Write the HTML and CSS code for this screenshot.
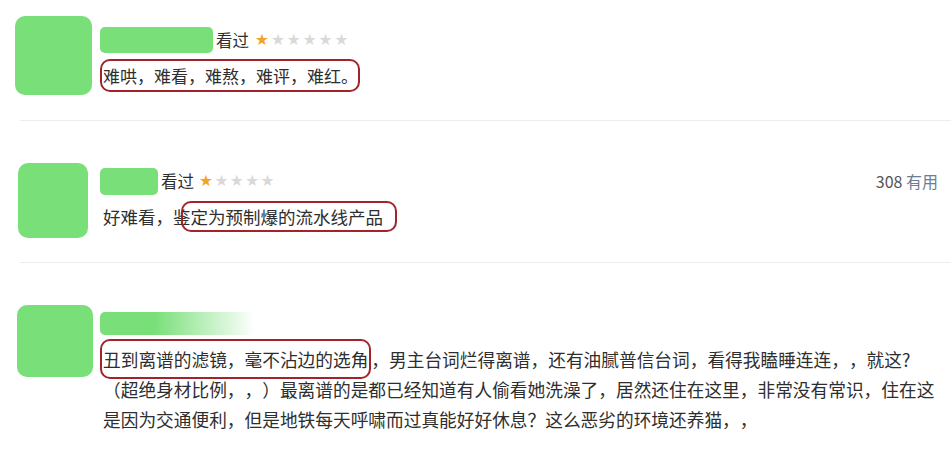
FILE: index.html
```html
<!DOCTYPE html>
<html lang="zh-CN">
<head>
  <meta charset="UTF-8" />
  <meta name="viewport" content="width=device-width, initial-scale=1.0" />
  <title>短评</title>
  <link rel="stylesheet" href="styles.css">
</head>
<body>
  <main class="reviews">

    <article class="review review--first">
      <div class="avatar avatar--a"></div>
      <div class="review-body review-body--first">
        <div class="review-head">
          <span class="name-mask name-mask--a"></span>
          <span class="watched">看过</span>
          <span class="stars"><span class="star-on">★</span>★★★★★</span>
        </div>
        <p class="review-text review-text--short"><span class="mark mark--a">难哄，难看，难熬，难评，难红。</span></p>
      </div>
    </article>

    <hr class="divider">

    <article class="review">
      <div class="avatar avatar--b"></div>
      <div class="review-body">
        <div class="review-head">
          <span class="name-mask name-mask--b"></span>
          <span class="watched">看过</span>
          <span class="stars stars--tight"><span class="star-on">★</span>★★★★</span>
          <span class="helpful">308 <span class="helpful-label">有用</span></span>
        </div>
        <p class="review-text">好难看，鉴<span class="mark mark--b">定为预制爆的流水线产品</span></p>
      </div>
    </article>

    <hr class="divider">

    <article class="review">
      <div class="avatar avatar--c"></div>
      <div class="review-body">
        <div class="review-head">
          <span class="name-mask name-mask--c"></span>
        </div>
        <p class="review-text review-text--long"><span class="mark mark--c">丑到离谱的滤镜，毫不沾边的选角</span>，男主台词烂得离谱，还有油腻普信台词，看得我瞌睡连连，，就这?<br>（超绝身材比例，，）最离谱的是都已经知道有人偷看她洗澡了，居然还住在这里，非常没有常识，住在这是因为交通便利，但是地铁每天呼啸而过真能好好休息？这么恶劣的环境还养猫，，</p>
      </div>
    </article>

  </main>
</body>
</html>
```

FILE: styles.css
```css
* { margin: 0; padding: 0; box-sizing: border-box; }

body {
  background: #ffffff;
  color: #2e2e2e;
  font-family: "Noto Sans CJK SC", "Noto Sans", sans-serif;
  font-size: 17.5px;
  text-spacing-trim: space-all; /* keep "，，" full width like the source */
}

.reviews { width: 951px; }

/* one comment: avatar slot + body */
.review {
  display: grid;
  grid-template-columns: 100px 1fr;
  align-items: start;
  padding: 42px 0 24px;
}
.review--first { padding: 16px 0 25px; }

.divider {
  border: 0;
  border-top: 1px solid #ededed;
  margin-left: 20px;
}

.avatar {
  background: #79df79;
  border-radius: 10px;
}
.avatar--a { width: 77px; height: 79px; margin-left: 15px; }
.avatar--b { width: 70px; height: 75px; margin-left: 18px; }
.avatar--c { width: 76px; height: 72px; margin-left: 17px; }

.review-body { padding-top: 5px; }
.review-body--first { padding-top: 11px; }

.review-head {
  display: flex;
  align-items: center;
  height: 26px;
}

.name-mask {
  display: block;
  height: 26px;
  background: #79df79;
  border-radius: 5px;
}
.name-mask--a { width: 113px; }
.name-mask--b { width: 58px; height: 27px; }
.name-mask--c {
  width: 155px;
  height: 23px;
  border-radius: 5px 0 0 5px;
  background: linear-gradient(90deg, #79df79 0%, #79df79 35%, rgba(121, 223, 121, 0) 100%);
}

.watched {
  font-size: 16.5px;
  margin-left: 3px;
  line-height: 26px;
}

.stars {
  font-family: "DejaVu Sans", sans-serif;
  font-size: 15.5px;
  line-height: 26px;
  color: #d9d9d9;
  letter-spacing: 2px;
  margin-left: 6px;
}
.stars--tight { letter-spacing: 1.5px; margin-left: 5px; }
.star-on { color: #f3a425; }

.helpful {
  margin-left: auto;
  margin-right: 13px;
  font-size: 16px;
  color: #555555;
}
.helpful-label { color: #6a7f96; }

.review-text {
  margin-top: 8px;
  padding-left: 3px;
  line-height: 30px;
}
.review-text--short { font-size: 17px; }
.review-text--long { font-size: 17.7px; max-width: 845px; }

/* red hand-drawn highlight boxes */
.mark {
  border: 2px solid #a2242a;
  border-radius: 10px;
}
.mark--a { margin-left: -3px; padding: 2px 0 2px 1px; }
.mark--b { margin-left: -10px; padding: 1px 12px 1px 8px; }
.mark--c { margin-left: -3px; padding: 5px 1px 5px 1px; }
```
